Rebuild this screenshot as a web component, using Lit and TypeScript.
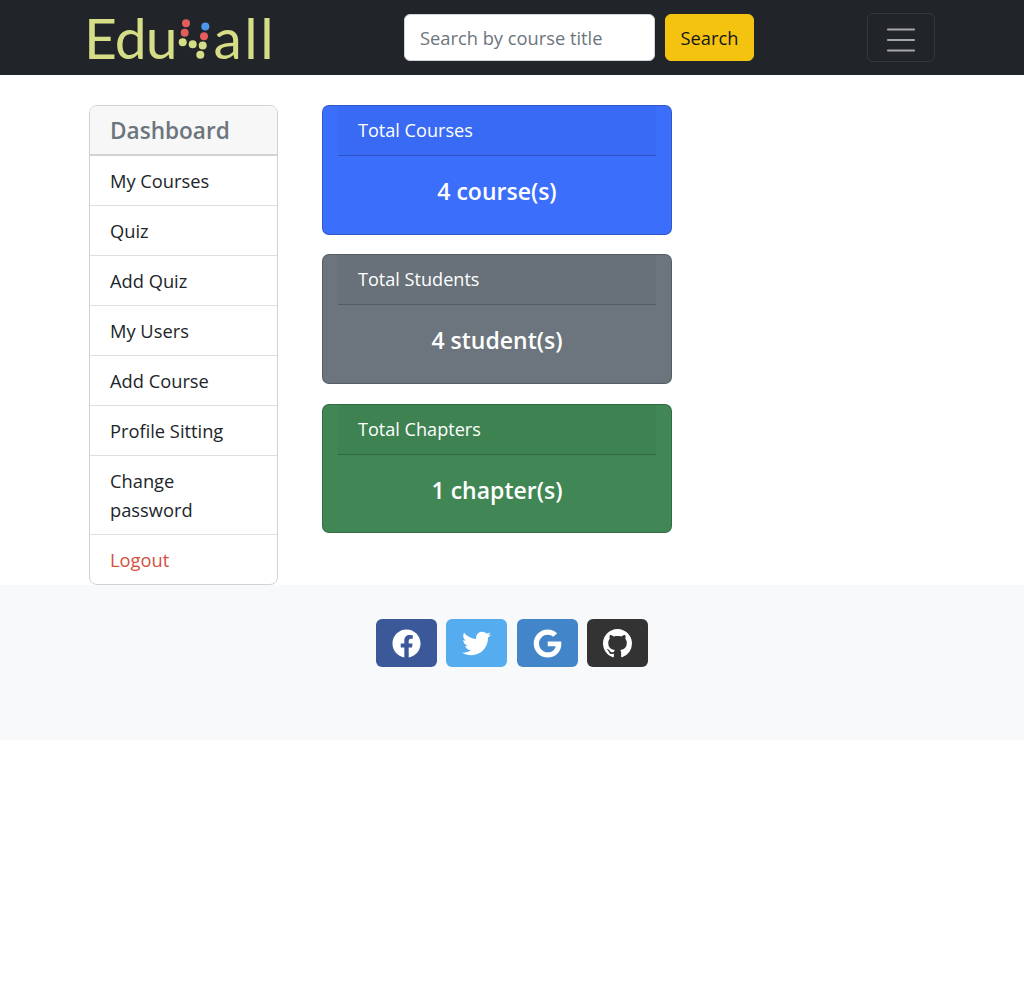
import { LitElement, html, css, svg } from 'lit';
import { customElement } from 'lit/decorators.js';

const MENU = ['My Courses', 'Quiz', 'Add Quiz', 'My Users', 'Add Course', 'Profile Sitting', 'Change password'];

const STATS = [
  { title: 'Total Courses', value: '4 course(s)', cls: 'blue' },
  { title: 'Total Students', value: '4 student(s)', cls: 'gray' },
  { title: 'Total Chapters', value: '1 chapter(s)', cls: 'green' },
];

const SOCIAL = [
  {
    cls: 'fb', box: '0 0 512 512',
    d: 'M504 256C504 119 393 8 256 8S8 119 8 256c0 123.78 90.69 226.38 209.25 245V327.69h-63V256h63v-54.64c0-62.15 37-96.48 93.67-96.48 27.14 0 55.52 4.84 55.52 4.84v61h-31.28c-30.8 0-40.41 19.12-40.41 38.73V256h68.78l-11 71.69h-57.78V501C413.31 482.38 504 379.78 504 256z',
  },
  {
    cls: 'tw', box: '0 0 512 512',
    d: 'M459.37 151.716c.325 4.548.325 9.097.325 13.645 0 138.72-105.583 298.558-298.558 298.558-59.452 0-114.68-17.219-161.137-47.106 8.447.974 16.568 1.299 25.34 1.299 49.055 0 94.213-16.568 130.274-44.832-46.132-.975-84.792-31.188-98.112-72.772 6.498.974 12.995 1.624 19.818 1.624 9.421 0 18.843-1.3 27.614-3.573-48.081-9.747-84.143-51.98-84.143-102.985v-1.299c13.969 7.797 30.214 12.67 47.431 13.319-28.264-18.843-46.781-51.005-46.781-87.391 0-19.492 5.197-37.36 14.294-52.954 51.655 63.675 129.3 105.258 216.365 109.807-1.624-7.797-2.599-15.918-2.599-24.04 0-57.828 46.782-104.934 104.934-104.934 30.213 0 57.502 12.67 76.67 33.137 23.715-4.548 46.456-13.32 66.599-25.34-7.798 24.366-24.366 44.833-46.132 57.827 21.117-2.273 41.584-8.122 60.426-16.243-14.292 20.791-32.161 39.308-52.628 54.253z',
  },
  {
    cls: 'gg', box: '0 0 488 512',
    d: 'M488 261.8C488 403.3 391.1 504 248 504 110.8 504 0 393.2 0 256S110.8 8 248 8c66.8 0 123 24.5 166.3 64.9l-67.5 64.9C258.5 52.6 94.3 116.6 94.3 256c0 86.5 69.1 156.6 153.7 156.6 98.2 0 135-70.4 140.8-106.9H248v-85.3h236.1c2.3 12.7 3.9 24.9 3.9 41.4z',
  },
  {
    cls: 'gh', box: '0 0 16 16',
    d: 'M8 0C3.58 0 0 3.58 0 8c0 3.54 2.29 6.53 5.47 7.59.4.07.55-.17.55-.38 0-.19-.01-.82-.01-1.49-2.01.37-2.53-.49-2.69-.94-.09-.23-.48-.94-.82-1.13-.28-.15-.68-.52-.01-.53.63-.01 1.08.58 1.23.82.72 1.21 1.87.87 2.33.66.07-.52.28-.87.51-1.07-1.78-.2-3.64-.89-3.64-3.95 0-.87.31-1.59.82-2.15-.08-.2-.36-1.02.08-2.12 0 0 .67-.21 2.2.82.64-.18 1.32-.27 2-.27.68 0 1.36.09 2 .27 1.53-1.04 2.2-.82 2.2-.82.44 1.1.16 1.92.08 2.12.51.56.82 1.27.82 2.15 0 3.07-1.87 3.75-3.65 3.95.29.25.54.73.54 1.48 0 1.07-.01 1.93-.01 2.2 0 .21.15.46.55.38A8.013 8.013 0 0016 8c0-4.42-3.58-8-8-8z',
  },
];

// the little dot figure that stands in for the letter between "Edu" and "all"
const logoDots = svg`
  <circle cx="7" cy="5.2" r="4" fill="#e35d5b" />
  <circle cx="5.7" cy="14.8" r="4" fill="#e35d5b" />
  <circle cx="26.3" cy="8.5" r="4" fill="#4d96e8" />
  <circle cx="25" cy="18.2" r="4" fill="#e35d5b" />
  <circle cx="3.7" cy="24.2" r="4" fill="#d5dd86" />
  <circle cx="13.7" cy="26.2" r="4" fill="#d5dd86" />
  <circle cx="23.7" cy="27.5" r="4" fill="#d5dd86" />
  <circle cx="21.3" cy="36.8" r="4" fill="#d5dd86" />
`;

@customElement('app-root')
export class AppRoot extends LitElement {
  static override styles = css`
    :host {
      display: block;
      font-family: 'Open Sans', 'Noto Sans', sans-serif;
      font-size: 18.3px;
      color: #212529;
    }

    /* --- Navbar --- */

    .navbar {
      height: 75px;
      box-sizing: border-box;
      background: #212529;
      display: flex;
      align-items: center;
      padding: 0 89px 0 84px;
    }

    .logo {
      width: 278px;
      display: flex;
      align-items: center;
      font-family: 'Lato', sans-serif;
      font-size: 57px;
      font-weight: 400;
      letter-spacing: -1px;
      line-height: 75px;
      color: #d5dd86;
    }

    .logo svg {
      width: 34px;
      height: 40px;
      flex: none;
      margin-left: 3px;
      overflow: visible;
    }

    .logo span {
      letter-spacing: 2.5px;
    }

    .search {
      margin-left: 42px;
      display: flex;
      gap: 10px;
    }

    .search input {
      width: 251px;
      height: 47px;
      box-sizing: border-box;
      border: 1px solid #ced4da;
      border-radius: 6px;
      padding: 0 15px;
      font: inherit;
      color: #212529;
      background: #fff;
    }

    .search input::placeholder {
      color: #6c757d;
      opacity: 1;
    }

    .search button {
      width: 89px;
      height: 47px;
      border: 1px solid #f3c30f;
      border-radius: 6px;
      background: #f3c30f;
      font: inherit;
      color: #14161a;
      padding: 0;
    }

    .toggler {
      margin-left: auto;
      width: 68px;
      height: 49px;
      box-sizing: border-box;
      border: 1px solid #34373b;
      border-radius: 6px;
      background: none;
      display: flex;
      align-items: center;
      justify-content: center;
      padding: 0;
    }

    .toggler svg {
      width: 30px;
      height: 30px;
    }

    /* --- Content --- */

    .content {
      display: flex;
      align-items: flex-start;
      gap: 44px;
      padding: 30px 0 0 89px;
    }

    .sidebar {
      width: 189px;
      box-sizing: border-box;
      border: 1px solid #d2d2d2;
      border-radius: 8px;
      overflow: hidden;
    }

    .sidebar h5 {
      margin: 0;
      height: 50px;
      box-sizing: border-box;
      padding-left: 20px;
      background: #f7f7f7;
      border-bottom: 2px solid #d2d2d2;
      font-size: 22.6px;
      font-weight: 600;
      line-height: 50px;
      color: #6c757d;
    }

    .sidebar a {
      display: block;
      padding: 10px 20px;
      line-height: 29px;
      color: #212529;
      text-decoration: none;
      border-bottom: 1px solid #dfdfdf;
    }

    .sidebar a.logout {
      color: #d4503f;
      border-bottom: 0;
    }

    .cards {
      width: 350px;
      display: flex;
      flex-direction: column;
      gap: 19.7px;
    }

    .card {
      height: 129.7px;
      box-sizing: border-box;
      border: 1px solid rgba(0, 0, 0, 0.2);
      border-radius: 7px;
      padding: 0 15px;
      color: #fff;
    }

    .card.blue { background: #3b6efb; }
    .card.gray { background: #6c757d; }
    .card.green { background: #408755; }

    .card h5 {
      margin: 0;
      height: 50px;
      box-sizing: border-box;
      padding-left: 20px;
      background: rgba(0, 0, 0, 0.03);
      border-bottom: 1px solid rgba(0, 0, 0, 0.2);
      font-size: 18.1px;
      font-weight: 400;
      line-height: 49px;
    }

    .card p {
      margin: 20px 0 0;
      text-align: center;
      font-size: 23px;
      font-weight: 600;
      line-height: 31px;
    }

    /* --- Footer --- */

    .footer {
      height: 155px;
      box-sizing: border-box;
      background: #f8f9fa;
      padding-top: 34px;
      display: flex;
      justify-content: center;
      align-items: flex-start;
      gap: 9.6px;
    }

    .social {
      width: 61px;
      height: 48px;
      border-radius: 6px;
      display: flex;
      align-items: center;
      justify-content: center;
    }

    .social svg {
      width: 29px;
      height: 29px;
      fill: #fff;
    }

    .social.fb { background: #3b5998; }
    .social.tw { background: #55acee; }
    .social.gg { background: #4285c9; }
    .social.gh { background: #333333; }
  `;

  override render() {
    return html`
      <header class="navbar">
        <div class="logo">
          Edu<svg viewBox="0 0 34 40">${logoDots}</svg><span>all</span>
        </div>
        <form class="search">
          <input type="text" placeholder="Search by course title" />
          <button type="button">Search</button>
        </form>
        <button class="toggler" type="button" aria-label="Menu">
          <svg viewBox="0 0 30 30">
            <path d="M2 6.5h26M2 17h26M2 27.5h26" stroke="rgba(255,255,255,.6)" stroke-width="2.2" stroke-linecap="round" />
          </svg>
        </button>
      </header>
      <main class="content">
        <nav class="sidebar">
          <h5>Dashboard</h5>
          ${MENU.map(item => html`<a href="#">${item}</a>`)}
          <a class="logout" href="#">Logout</a>
        </nav>
        <section class="cards">
          ${STATS.map(
            s => html`
              <div class="card ${s.cls}">
                <h5>${s.title}</h5>
                <p>${s.value}</p>
              </div>
            `
          )}
        </section>
      </main>
      <footer class="footer">
        ${SOCIAL.map(
          s => html`
            <a class="social ${s.cls}" href="#">
              <svg viewBox=${s.box}><path d=${s.d} /></svg>
            </a>
          `
        )}
      </footer>
    `;
  }
}
